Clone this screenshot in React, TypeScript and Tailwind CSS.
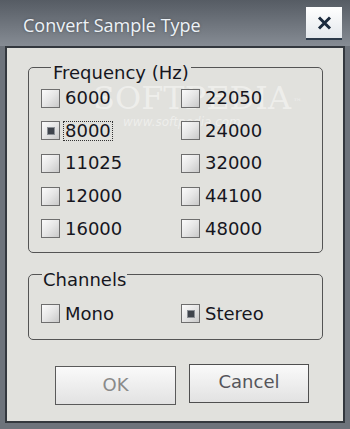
import React from 'react'

const font = { fontFamily: '"DejaVu Sans", Verdana, sans-serif' }

function Box({ checked }: { checked?: boolean }) {
  return (
    <span className="w-[19px] h-[19px] shrink-0 border border-[#6e6e6e] bg-gradient-to-br from-[#fbfbfb] via-[#e6e6e6] to-[#c9c9c9] flex items-center justify-center">
      {checked && <span className="w-[8px] h-[8px] bg-[#3f444c] border border-[#8c9096]" />}
    </span>
  )
}

function Check({ label, checked, focus }: { label: string; checked?: boolean; focus?: boolean }) {
  return (
    <div className="flex items-center gap-[3px]">
      <Box checked={checked} />
      <span className={`leading-[18px] px-[1px] ${focus ? 'border border-dotted border-[#333]' : 'border border-transparent'}`}>
        {label}
      </span>
    </div>
  )
}

const freqs: [string, string, boolean?][] = [
  ['6000', '22050'],
  ['8000', '24000', true],
  ['11025', '32000'],
  ['12000', '44100'],
  ['16000', '48000'],
]

export default function App() {
  return (
    <div className="w-[350px] h-[429px] bg-[#6d737b] flex flex-col relative overflow-hidden" style={font}>
      <div className="h-[46px] shrink-0 bg-gradient-to-b from-[#565c64] to-[#868c94] flex items-center pl-[23px] pr-[8px]">
        <span
          className="flex-1 text-[18px] pt-[5px] text-[#edf2f7] [text-shadow:0_0_3px_rgba(0,0,0,0.35)]"
          style={{ fontFamily: '"Open Sans", "Noto Sans", sans-serif' }}
        >
          Convert Sample Type
        </span>
        <button className="w-[36px] h-[33px] mt-[1px] bg-gradient-to-b from-white to-[#e4e8ec] border-b-2 border-[#2c3a4a] flex items-center justify-center">
          <svg width="15" height="14" viewBox="0 0 15 14">
            <path d="M2 1.5 L13 12.5 M13 1.5 L2 12.5" stroke="#1b2a3d" strokeWidth="3" />
          </svg>
        </button>
      </div>

      <div className="flex-1 mx-[5px] mb-[6px] border-2 border-[#33383e] bg-[#e1e1dd] text-[18px] text-[#16161e] flex flex-col relative">
        {/* watermark */}
        <div className="absolute left-[86px] top-[33px] pointer-events-none select-none text-white/45" style={{ fontFamily: '"DejaVu Serif", serif' }}>
          <div className="text-[32px] leading-[34px]">SOFTPEDIA<sup className="text-[9px] ml-[2px]">™</sup></div>
          <div className="text-[12px] leading-[14px] ml-[30px] italic" style={font}>www.softpedia.com</div>
        </div>

        <fieldset className="ml-[21px] mr-[20px] mt-[4px] border border-[#545454] rounded-[5px] pl-[12px] pb-[7px]">
          <legend className="ml-[10px] px-[2px] pt-[11px] leading-[20px]">Frequency (Hz)</legend>
          <div className="grid grid-cols-[140px_1fr] auto-rows-[32.6px] items-center -mt-[1px] relative">
            {freqs.map(([a, b, sel]) => (
              <React.Fragment key={a}>
                <Check label={a} checked={sel} focus={sel} />
                <Check label={b} />
              </React.Fragment>
            ))}
          </div>
        </fieldset>

        <fieldset className="ml-[21px] mr-[20px] mt-[6px] border border-[#545454] rounded-[5px] pl-[12px] pb-[9px]">
          <legend className="ml-[1px] px-[1px] pt-[11px] leading-[20px]">Channels</legend>
          <div className="grid grid-cols-[140px_1fr] h-[32px] items-center mt-[8px]">
            <Check label="Mono" />
            <Check label="Stereo" checked />
          </div>
        </fieldset>

        <div className="flex items-start gap-[13px] ml-[48px] mt-[24px]">
          <button className="w-[121px] h-[39px] mt-[2px] border border-[#5a5a5a] bg-gradient-to-b from-[#fafafa] to-[#e2e2e2] text-[#8a8a8a] pb-[2px]">
            OK
          </button>
          <button className="w-[120px] h-[39px] border border-[#4f4f4f] bg-gradient-to-b from-[#fafafa] to-[#e2e2e2] text-[#55555a] pb-[4px]">
            Cancel
          </button>
        </div>
      </div>
    </div>
  )
}
